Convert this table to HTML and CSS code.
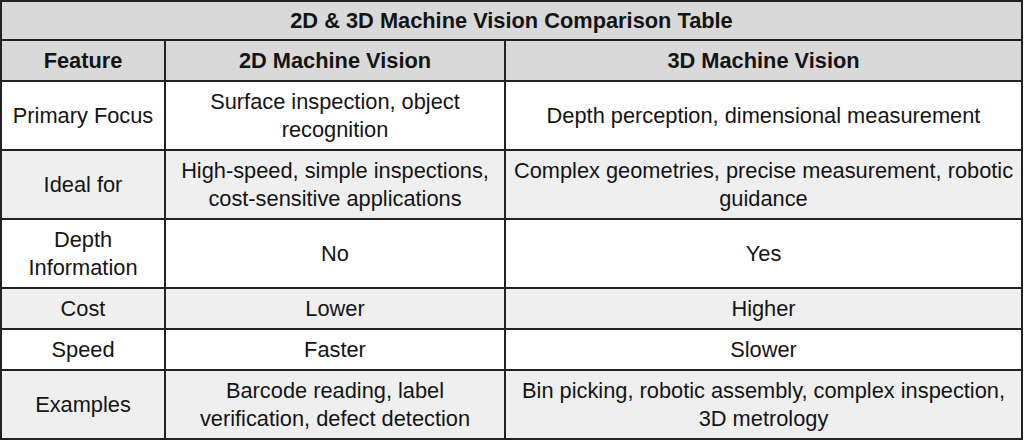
FILE: index.html
```html
<!DOCTYPE html>
<html lang="en">
<head>
<meta charset="utf-8">
<title>2D &amp; 3D Machine Vision Comparison Table</title>
<link rel="stylesheet" href="styles.css">
</head>
<body>
<table class="cmp">
  <colgroup>
    <col class="c-feature">
    <col class="c-2d">
    <col class="c-3d">
  </colgroup>
  <thead>
    <tr class="title-row"><th colspan="3">2D &amp; 3D Machine Vision Comparison Table</th></tr>
    <tr class="head-row"><th>Feature</th><th>2D Machine Vision</th><th>3D Machine Vision</th></tr>
  </thead>
  <tbody>
    <tr class="r-white"><td>Primary Focus</td><td>Surface inspection, object recognition</td><td>Depth perception, dimensional measurement</td></tr>
    <tr class="r-grey"><td>Ideal for</td><td>High-speed, simple inspections, cost-sensitive applications</td><td>Complex geometries, precise measurement, robotic guidance</td></tr>
    <tr class="r-white"><td>Depth Information</td><td>No</td><td>Yes</td></tr>
    <tr class="r-grey"><td>Cost</td><td>Lower</td><td>Higher</td></tr>
    <tr class="r-white"><td>Speed</td><td>Faster</td><td>Slower</td></tr>
    <tr class="r-grey"><td>Examples</td><td>Barcode reading, label verification, defect detection</td><td>Bin picking, robotic assembly, complex inspection, 3D metrology</td></tr>
  </tbody>
</table>
</body>
</html>
```
FILE: styles.css
```css
html, body {
  margin: 0;
  padding: 0;
  background: #ffffff;
}

.cmp {
  width: 1023px;
  border-collapse: collapse;
  table-layout: fixed;
  font-family: "Liberation Sans", Arial, sans-serif;
  font-size: 21.8px;
  line-height: 28px;
  color: #141414;
}

.c-feature { width: 164px; }
.c-2d { width: 340px; }
.c-3d { width: auto; }

.cmp th,
.cmp td {
  border: 2px solid #222222;
  padding: 5.5px 5px;
  text-align: center;
  vertical-align: middle;
}

.cmp th {
  font-weight: bold;
  background: #d9d9d9;
}

.title-row th {
  padding: 4.5px 5px;
}

.r-white td { background: #ffffff; }
.r-grey td { background: #efefef; }
```
